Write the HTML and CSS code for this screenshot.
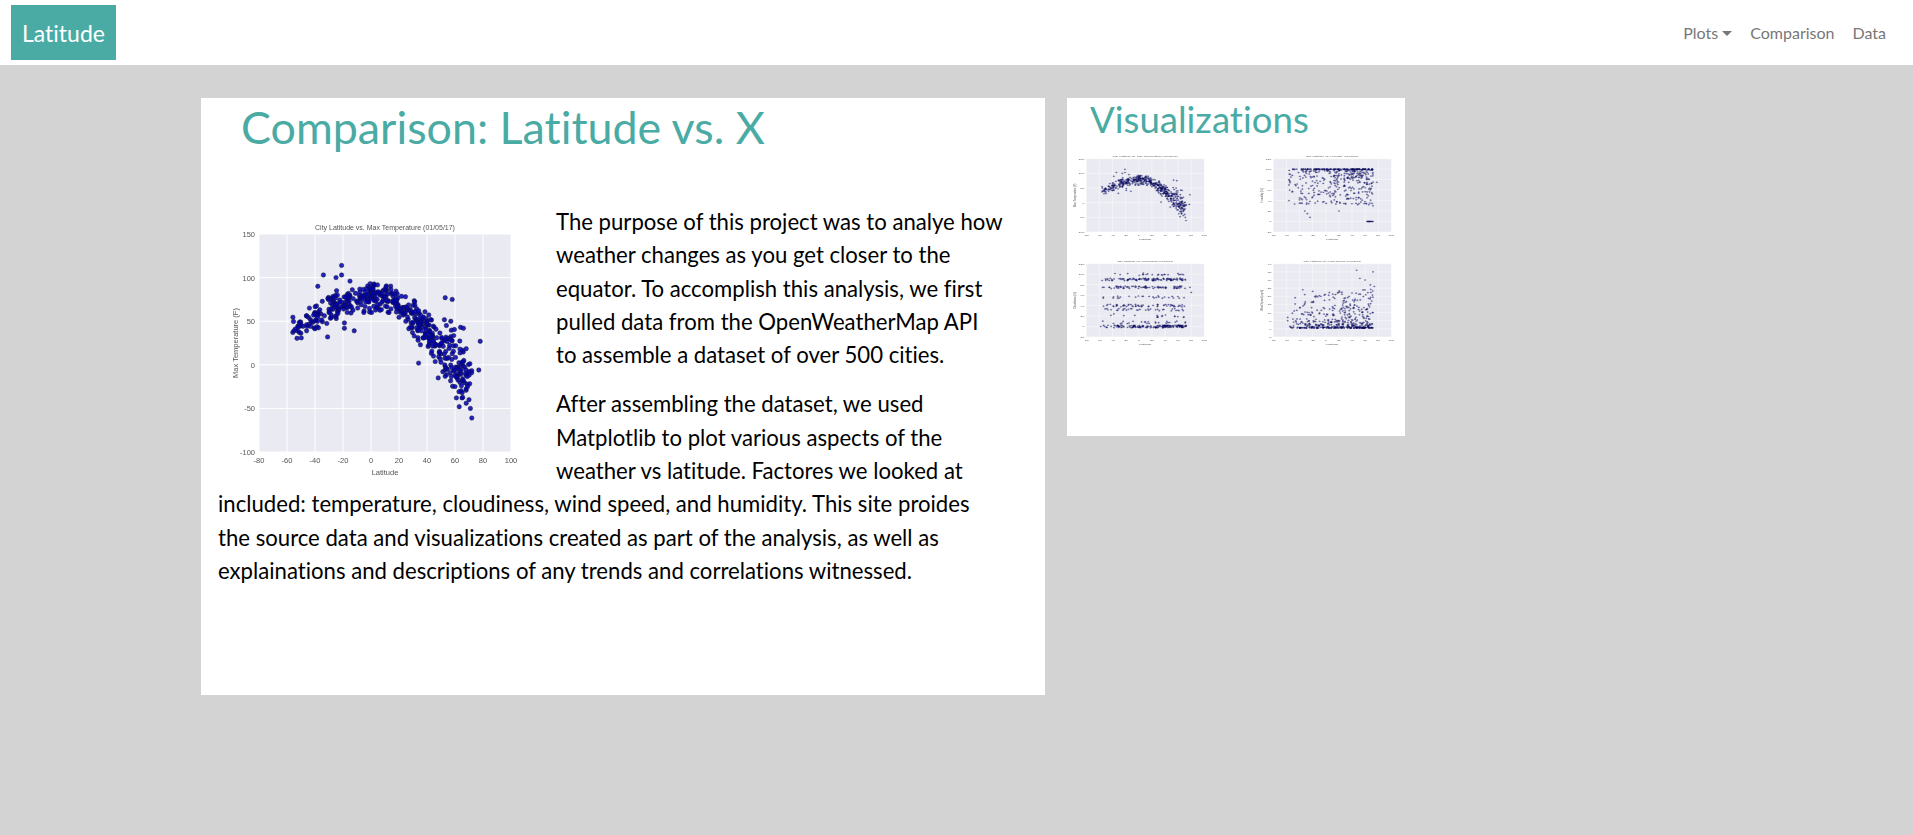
FILE: index.html
```html
<!DOCTYPE html>
<html lang="en">
<head>
  <meta charset="UTF-8">
  <meta name="viewport" content="width=device-width, initial-scale=1">
  <title>Latitude</title>
  <link rel="stylesheet" href="styles.css">
</head>
<body>
  <nav class="navbar">
    <a class="brand" href="#">Latitude</a>
    <ul class="nav-links">
      <li><a href="#">Plots<span class="caret"></span></a></li>
      <li><a href="#">Comparison</a></li>
      <li><a href="#">Data</a></li>
    </ul>
  </nav>

  <main class="page">
    <section class="card card-main">
      <h1>Comparison: Latitude vs. X</h1>
      <div class="copy">
        <svg class="plot plot-large" data-plot="temp" viewBox="0 0 322 277"></svg>
        <p>The purpose of this project was to analye how weather changes as you get closer to the equator. To accomplish this analysis, we first pulled data from the OpenWeatherMap API<br>to assemble a dataset of over 500 cities.</p>
        <p>After assembling the dataset, we used Matplotlib to plot various aspects of the weather vs latitude. Factores we looked at included: temperature, cloudiness, wind speed, and humidity. This site proides<br>the source data and visualizations created as part of the analysis, as well as explainations and descriptions of any trends and correlations witnessed.</p>
      </div>
    </section>

    <aside class="card card-side">
      <h2>Visualizations</h2>
      <div class="thumbs">
        <svg class="plot plot-thumb" data-plot="temp" viewBox="0 0 322 277" preserveAspectRatio="none"></svg>
        <svg class="plot plot-thumb" data-plot="humidity" viewBox="0 0 322 277" preserveAspectRatio="none"></svg>
        <svg class="plot plot-thumb" data-plot="cloud" viewBox="0 0 322 277" preserveAspectRatio="none"></svg>
        <svg class="plot plot-thumb" data-plot="wind" viewBox="0 0 322 277" preserveAspectRatio="none"></svg>
      </div>
    </aside>
  </main>

  <script src="plots.js"></script>
</body>
</html>
```

FILE: styles.css
```css
* {
  box-sizing: border-box;
}
body {
  margin: 0;
  min-height: 835px;
  background-color: #d3d3d3;
  font-family: "Lato", "Liberation Sans", sans-serif;
  font-variant-ligatures: none;
  color: #000;
}
.navbar {
  display: flex;
  align-items: center;
  justify-content: space-between;
  height: 65px;
  padding: 0 27px 0 11px;
  background-color: #fff;
}
.brand {
  display: flex;
  align-items: center;
  justify-content: center;
  width: 105px;
  height: 55px;
  background-color: #4aaba5;
  color: #fff;
  font-size: 23px;
  text-decoration: none;
}
.nav-links {
  display: flex;
  gap: 18px;
  margin: 0;
  padding: 0;
  list-style: none;
}
.nav-links a {
  color: #777;
  font-size: 16px;
  text-decoration: none;
}
.caret {
  display: inline-block;
  margin-left: 4px;
  vertical-align: 3px;
  border-top: 5px solid #777;
  border-left: 5px solid transparent;
  border-right: 5px solid transparent;
}
.page {
  display: flex;
  align-items: flex-start;
  gap: 22px;
  padding: 33px 0 0 201px;
}
.card {
  background-color: #fff;
}
.card-main {
  width: 844px;
  height: 597px;
  padding: 0 36px 0 17px;
}
.card-main h1 {
  margin: 0 0 51px 23px;
  padding-top: 2px;
  color: #4aaba5;
  font-size: 44.8px;
  font-weight: 400;
  line-height: 54px;
}
.copy p {
  margin: 0 0 16px;
  font-size: 22.15px;
  line-height: 33.3px;
}
.plot-large {
  float: left;
  width: 322px;
  height: 277px;
  margin-right: 16px;
}
.card-side {
  width: 338px;
  height: 338px;
}
.card-side h2 {
  margin: 0;
  padding: 0 0 0 23px;
  height: 51px;
  color: #4aaba5;
  font-size: 36.6px;
  font-weight: 400;
  line-height: 43px;
}
.thumbs {
  display: flex;
  flex-wrap: wrap;
  justify-content: space-between;
  row-gap: 12px;
}
.plot-thumb {
  width: 151px;
  height: 93px;
}
.plot {
  display: block;
  filter: blur(0.5px);
}
.plot text {
  fill: #555;
  font-family: "Liberation Sans", sans-serif;
  font-size: 7.5px;
}
.plot .title {
  font-size: 7px;
  text-anchor: middle;
}
.plot .tick-x,
.plot .label-x {
  text-anchor: middle;
}
.plot .tick-y {
  text-anchor: end;
}
.plot .label-y {
  text-anchor: middle;
}
.plot .bg {
  fill: #eaeaf2;
}
.plot line {
  stroke: #fff;
  stroke-width: 1;
}
.plot circle {
  fill: #0000b4;
  fill-opacity: 0.85;
  stroke: #14143c;
  stroke-width: 0.5;
}
.plot-thumb circle {
  r: 1.8px;
  fill: #00008c;
  fill-opacity: 0.5;
}
```

FILE: plots.js
```js
// plot box inside the 322x277 viewBox
const LEFT = 41, TOP = 29, W = 252, H = 218;

function seeded(seed) {
  return function () {
    seed = (seed * 1664525 + 1013904223) % 4294967296;
    return seed / 4294967296;
  };
}

// latitudes lean north, like the real city sample
function randLat(r) {
  const n = r();
  if (n < 0.05) return -56 + r() * 18;
  if (n < 0.28) return -40 + r() * 35;
  if (n < 0.55) return -5 + r() * 35;
  return 28 + r() * 44;
}

// rough trend of the temperature cloud, [lat, temp]
const TREND = [[-55, 40], [-20, 74], [10, 79], [30, 56], [45, 30], [60, 6], [72, -25]];

function trend(lat) {
  for (let i = 1; i < TREND.length; i++) {
    if (lat <= TREND[i][0]) {
      const a = TREND[i - 1], b = TREND[i];
      return a[1] + ((lat - a[0]) / (b[0] - a[0])) * (b[1] - a[1]);
    }
  }
  return TREND[TREND.length - 1][1];
}

function tempPoints() {
  const r = seeded(7), pts = [];
  for (let i = 0; i < 480; i++) {
    const lat = randLat(r);
    const spread = lat > 45 ? 40 : lat > 25 ? 26 : 20;
    pts.push([lat, trend(lat) + (r() + r() - 1) * spread]);
  }
  return pts.concat([[-21, 114], [-21, 103], [-34, 103], [-25, 100], [-38, 90], [-15, 96],
    [-31, 32], [-12, 39], [-19, 42], [-19, 48], [53, 77], [58, 75], [57, 50], [78, 27],
    [77, -6], [72, -61], [71, -50], [34, 2], [48, -15], [-55, 39], [-54, 41], [-52, 44],
    [-46, 56], [-46, 46], [-46, 39], [-43, 44], [-44, 65], [-41, 57], [70, -40], [65, -38],
    [68, -44], [63, -48], [61, -38], [69, -25], [60, -25], [64, 43], [66, 42]]);
}

function humidityPoints() {
  const r = seeded(21), pts = [];
  for (let i = 0; i < 460; i++) {
    const lat = randLat(r);
    const h = r() < 0.2 ? 100 : 100 - Math.pow(r(), 1.7) * 68;
    pts.push([lat, h]);
  }
  for (let i = 0; i < 12; i++) pts.push([62 + r() * 10, 0]);
  return pts.concat([[-56, 80], [-55, 60], [-56, 70], [-50, 100], [-40, 35], [-38, 35], [-36, 35],
    [-32, 20], [-24, 8], [-28, 15], [20, 20], [78, 75], [72, 30]]);
}

function cloudPoints() {
  const r = seeded(33), pts = [];
  const rows = [0, 0, 0, 0, 0, 8, 20, 32, 40, 40, 56, 75, 75, 75, 90, 90, 90, 100];
  for (let i = 0; i < 500; i++) {
    pts.push([randLat(r), rows[Math.floor(r() * rows.length)] + (r() - 0.5) * 5]);
  }
  return pts.concat([[-55, 75], [-53, 75], [-45, 88], [-45, 75], [-58, 0], [-52, 0], [-47, 32],
    [-42, 32], [-38, 24], [78, 75], [80, 65]]);
}

function windPoints() {
  const r = seeded(55), pts = [];
  for (let i = 0; i < 480; i++) {
    const lat = randLat(r);
    const reach = lat < -5 ? 20 : 24;
    pts.push([lat, 0.5 + Math.pow(r(), 2.8) * reach]);
  }
  return pts.concat([[47, 36], [72, 35], [52, 31], [60, 30], [68, 27], [74, 26], [-35, 24],
    [-20, 23], [-32, 21], [18, 22], [40, 22], [-58, 7], [-58, 5], [-48, 11], [-50, 6]]);
}

const PLOTS = {
  temp: { title: "City Latitude vs. Max Temperature (01/05/17)", label: "Max Temperature (F)",
    min: -100, max: 150, step: 50, points: tempPoints },
  humidity: { title: "City Latitude vs. Humidity (01/05/17)", label: "Humidity (%)",
    min: -20, max: 120, step: 20, points: humidityPoints },
  cloud: { title: "City Latitude vs. Cloudiness (01/05/17)", label: "Cloudiness (%)",
    min: -20, max: 120, step: 20, points: cloudPoints },
  wind: { title: "City Latitude vs. Wind Speed (01/05/17)", label: "Wind Speed (mph)",
    min: -5, max: 40, step: 5, points: windPoints }
};

function drawPlot(svg) {
  const plot = PLOTS[svg.dataset.plot];
  const px = (lat) => LEFT + ((lat + 80) / 180) * W;
  const py = (v) => TOP + ((plot.max - v) / (plot.max - plot.min)) * H;
  let out = `<rect class="bg" x="${LEFT}" y="${TOP}" width="${W}" height="${H}"></rect>`;

  for (let lat = -80; lat <= 100; lat += 20) {
    out += `<line x1="${px(lat)}" x2="${px(lat)}" y1="${TOP}" y2="${TOP + H}"></line>`;
    out += `<text class="tick-x" x="${px(lat)}" y="${TOP + H + 11}">${lat}</text>`;
  }
  for (let v = plot.min; v <= plot.max; v += plot.step) {
    out += `<line x1="${LEFT}" x2="${LEFT + W}" y1="${py(v)}" y2="${py(v)}"></line>`;
    out += `<text class="tick-y" x="${LEFT - 4}" y="${py(v) + 3}">${v}</text>`;
  }
  out += `<text class="title" x="${LEFT + W / 2}" y="${TOP - 4}">${plot.title}</text>`;
  out += `<text class="label-x" x="${LEFT + W / 2}" y="${TOP + H + 23}">Latitude</text>`;
  out += `<text class="label-y" transform="translate(20 ${TOP + H / 2}) rotate(-90)">${plot.label}</text>`;

  plot.points().forEach(function (p) {
    out += `<circle cx="${px(p[0]).toFixed(1)}" cy="${py(p[1]).toFixed(1)}" r="2.2"></circle>`;
  });
  svg.innerHTML = out;
}

document.querySelectorAll("[data-plot]").forEach(drawPlot);
```
